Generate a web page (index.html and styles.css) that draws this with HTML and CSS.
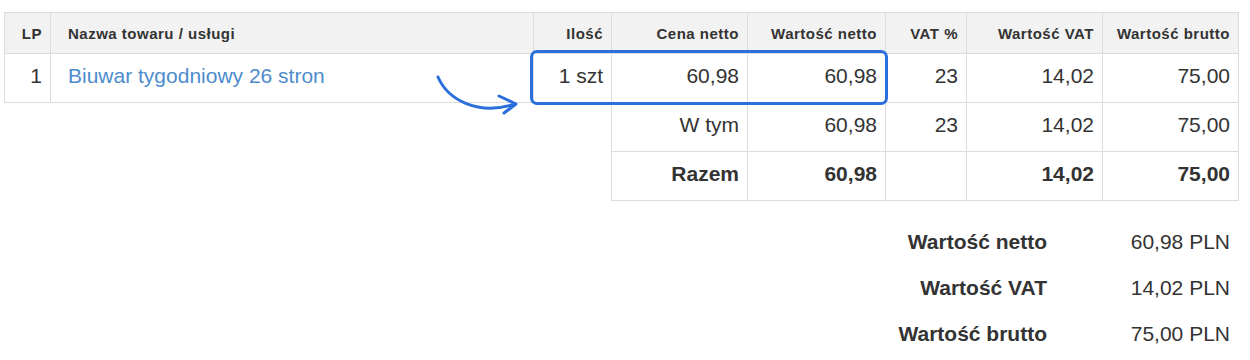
FILE: index.html
```html
<!DOCTYPE html>
<html lang="pl">

<head>
    <meta charset="UTF-8">
    <meta name="viewport" content="width=device-width, initial-scale=1.0">
    <title>Pozycje faktury</title>
    <link rel="stylesheet" href="styles.css">
</head>

<body>
    <div class="invoice">
        <table class="items">
            <colgroup>
                <col class="c-lp">
                <col class="c-name">
                <col class="c-qty">
                <col class="c-price">
                <col class="c-net">
                <col class="c-rate">
                <col class="c-vat">
                <col class="c-gross">
            </colgroup>
            <thead>
                <tr>
                    <th>LP</th>
                    <th class="left">Nazwa towaru / usługi</th>
                    <th>Ilość</th>
                    <th>Cena netto</th>
                    <th>Wartość netto</th>
                    <th>VAT %</th>
                    <th>Wartość VAT</th>
                    <th>Wartość brutto</th>
                </tr>
            </thead>
            <tbody>
                <tr class="item">
                    <td>1</td>
                    <td class="left"><a href="#" class="product">Biuwar tygodniowy 26 stron</a></td>
                    <td>1 szt</td>
                    <td>60,98</td>
                    <td>60,98</td>
                    <td>23</td>
                    <td>14,02</td>
                    <td>75,00</td>
                </tr>
                <tr class="sum">
                    <td class="blank" colspan="3"></td>
                    <td>W tym</td>
                    <td>60,98</td>
                    <td>23</td>
                    <td>14,02</td>
                    <td>75,00</td>
                </tr>
                <tr class="sum total">
                    <td class="blank" colspan="3"></td>
                    <td>Razem</td>
                    <td>60,98</td>
                    <td></td>
                    <td>14,02</td>
                    <td>75,00</td>
                </tr>
            </tbody>
        </table>

        <!-- highlight over the quantity and net columns -->
        <div class="highlight"></div>
        <svg class="arrow" width="100" height="50" viewBox="430 70 100 50">
            <path d="M 438 77 C 448 100, 478 116, 515 104" fill="none" stroke="#2a6fdb" stroke-width="3" stroke-linecap="round"></path>
            <path d="M 499 96 L 516 104 L 504 113" fill="none" stroke="#2a6fdb" stroke-width="3" stroke-linecap="round" stroke-linejoin="round"></path>
        </svg>

        <div class="summary">
            <div class="label">Wartość netto</div>
            <div class="value">60,98 PLN</div>
            <div class="label">Wartość VAT</div>
            <div class="value">14,02 PLN</div>
            <div class="label">Wartość brutto</div>
            <div class="value">75,00 PLN</div>
        </div>
    </div>
</body>

</html>
```

FILE: styles.css
```css
body {
    margin: 0;
    background: #fff;
    font-family: "Liberation Sans", Arial, sans-serif;
    color: #333;
}

.invoice {
    position: relative;
    width: 1234px;
    padding: 12px 0 0 4px;
}

.items {
    width: 1234px;
    border-collapse: collapse;
    table-layout: fixed;
}

.c-lp { width: 46px; }
.c-name { width: 483px; }
.c-qty { width: 78px; }
.c-price { width: 136px; }
.c-net { width: 138px; }
.c-rate { width: 81px; }
.c-vat { width: 136px; }
.c-gross { width: 136px; }

.items th,
.items td {
    border: 1px solid #dcdcdc;
    text-align: right;
    padding: 0 8px;
    white-space: nowrap;
}

.items th {
    height: 40px;
    background: #f2f2f2;
    font-size: 15px;
    letter-spacing: 0.5px;
    font-weight: bold;
    color: #333;
}

.items td {
    font-size: 21px;
    height: 44px;
    padding-bottom: 4px;
}

.items .left {
    text-align: left;
    padding-left: 17px;
}

.product {
    color: #4d8ccc;
    text-decoration: none;
}

.items td.blank {
    border: none;
}

.total td {
    font-weight: bold;
}

.highlight {
    position: absolute;
    left: 530px;
    top: 50px;
    width: 352px;
    height: 49px;
    border: 3px solid #2a6fdb;
    border-radius: 7px;
    pointer-events: none;
}

.arrow {
    position: absolute;
    left: 430px;
    top: 70px;
}

.summary {
    display: grid;
    grid-template-columns: auto 183px;
    justify-content: end;
    margin-top: 29px;
    padding-right: 8px;
    font-size: 21px;
}

.summary .label,
.summary .value {
    height: 46px;
    line-height: 24px;
    text-align: right;
}

.summary .label {
    font-weight: bold;
}
```
